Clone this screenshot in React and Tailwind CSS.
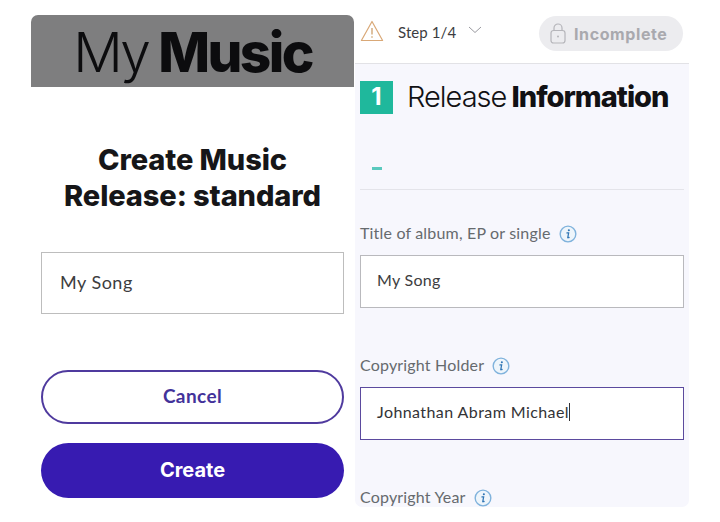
import React from 'react';

const body = "font-['Lato','Noto_Sans',sans-serif]";
const display = "font-['Inter','Noto_Sans',sans-serif]";

const InfoIcon = () => (
  <svg width="18" height="18" viewBox="0 0 17 17" fill="none" className="shrink-0 mt-[2px]">
    <circle cx="8.5" cy="8.5" r="7.4" fill="#eef5fb" stroke="#7fb2dc" strokeWidth="1.3" />
    <circle cx="9.3" cy="4.9" r="1" fill="#2f75b5" />
    <path d="M7.5 7.5h1.6l-.8 4.3h1.2" stroke="#2f75b5" strokeWidth="1.2" strokeLinecap="round" />
  </svg>
);

const FieldLabel = ({ children }) => (
  <div className={`flex items-center gap-[8px] text-[16px] leading-5 tracking-[0.18px] text-[#666a6e] ${body}`}>
    {children}
    <InfoIcon />
  </div>
);

const LeftColumn = () => (
  <div className="w-[323px] shrink-0 pt-[15px]">
    <div className="h-[72px] rounded-t-[7px] bg-[#7e7e7f] overflow-hidden flex justify-center">
      <div className={`h-[72px] pt-[4px] text-[55px] leading-[66px] tracking-[-2.6px] text-[#0c0c0e] ${display}`}>
        <span className="font-light">My </span>
        <span className="font-extrabold -ml-[3px]">Music</span>
      </div>
    </div>
    <h1 className={`mt-[55px] text-center text-[29px] leading-[36px] font-extrabold tracking-[-0.1px] text-[#161618] ${display}`}>
      Create Music<br />Release: standard
    </h1>
    <div className="mx-[10px] mt-[38px]">
      <div className={`h-[62px] border border-[#bdbdbd] bg-white pl-[18px] pb-[2px] flex items-center text-[18px] tracking-[0.5px] text-[#3d3d40] ${body}`}>
        My Song
      </div>
      <button className={`mt-[56px] h-[54px] w-full rounded-full border-2 border-[#4f3a9e] bg-white pb-[2px] text-[19px] font-bold tracking-[0.4px] text-[#43329a] ${body}`}>
        Cancel
      </button>
      <button className={`mt-[19px] h-[55px] w-full rounded-full bg-[#371bb1] pb-[2px] text-[20px] font-bold text-white ${display}`}>
        Create
      </button>
    </div>
  </div>
);

const RightColumn = () => (
  <div className="w-[334px] h-[507px] ml-px overflow-hidden rounded-b-[7px] bg-[#f7f7fd]">
    <div className="h-[64px] bg-white border-b border-[#e2e2e6] flex items-center pl-[5px] pr-[6px]">
      <svg width="24" height="22" viewBox="0 0 24 22" fill="none" className="-mt-[2px] shrink-0">
        <path d="M12 1.5 22.6 20.5H1.4Z" stroke="#d9a877" strokeWidth="1.2" strokeLinejoin="round" />
        <path d="M12 8v6.5" stroke="#c9985f" strokeWidth="1.2" />
        <circle cx="12" cy="17" r="0.8" fill="#c9985f" />
      </svg>
      <span className={`ml-[14px] mt-[2px] text-[15px] tracking-[0.1px] text-[#3c3c40] ${body}`}>Step 1/4</span>
      <svg width="14" height="8" viewBox="0 0 14 8" fill="none" className="ml-[12px] -mt-[4px]">
        <path d="M1 1l6 5.5L13 1" stroke="#9a9aa0" strokeWidth="1" />
      </svg>
      <div className="ml-auto h-[35px] w-[144px] mt-[4px] rounded-full bg-[#ececef] flex items-center pl-[11px] gap-[8px]">
        <svg width="16" height="21" viewBox="0 0 16 21" fill="none">
          <rect x="1" y="7.5" width="14" height="12.5" rx="2.5" stroke="#b5b5ba" strokeWidth="1.2" />
          <path d="M4 7.5V5a4 4 0 0 1 8 0v2.5" stroke="#b5b5ba" strokeWidth="1.2" />
          <circle cx="8" cy="13.5" r="1" fill="#b5b5ba" />
        </svg>
        <span className={`text-[16px] font-bold tracking-[0.6px] text-[#a9a9ae] ${display}`}>Incomplete</span>
      </div>
    </div>

    <div className="pl-[5px] pr-[5px]">
      <div className="mt-[16px] flex items-center">
        <div className={`w-[33px] h-[33px] bg-[#1fb89c] flex items-center justify-center text-[24px] font-bold text-white ${display}`}>
          1
        </div>
        <div className={`ml-[14px] text-[29px] leading-[34px] tracking-[-1px] text-[#111114] ${display}`}>
          <span className="font-light">Release </span>
          <span className="font-extrabold -ml-[2px]">Information</span>
        </div>
      </div>
      <div className="ml-[12px] mt-[53px] w-[10px] h-[3px] bg-[#5ac9be]" />
      <div className="mt-[19px] h-px bg-[#e4e4ea]" />

      <div className="mt-[33px]"><FieldLabel>Title of album, EP or single</FieldLabel></div>
      <div className={`mt-[12px] h-[53px] border border-[#b9b9bd] bg-white pl-[16px] pb-[4px] flex items-center text-[16px] tracking-[0.3px] text-[#3d3d40] ${body}`}>
        My Song
      </div>

      <div className="mt-[47px]"><FieldLabel>Copyright Holder</FieldLabel></div>
      <div className={`mt-[12px] h-[53px] border border-[#5b4a9e] bg-white pl-[16px] pb-[4px] flex items-center text-[16px] tracking-[0.42px] text-[#333336] ${body}`}>
        Johnathan Abram Michael
        <span className="w-px h-[18px] bg-[#333336]" />
      </div>

      <div className="mt-[47px]"><FieldLabel>Copyright Year</FieldLabel></div>
    </div>
  </div>
);

export default function App() {
  return (
    <div className="w-[720px] h-[522px] bg-white overflow-hidden flex pl-[31px]">
      <LeftColumn />
      <RightColumn />
    </div>
  );
}
